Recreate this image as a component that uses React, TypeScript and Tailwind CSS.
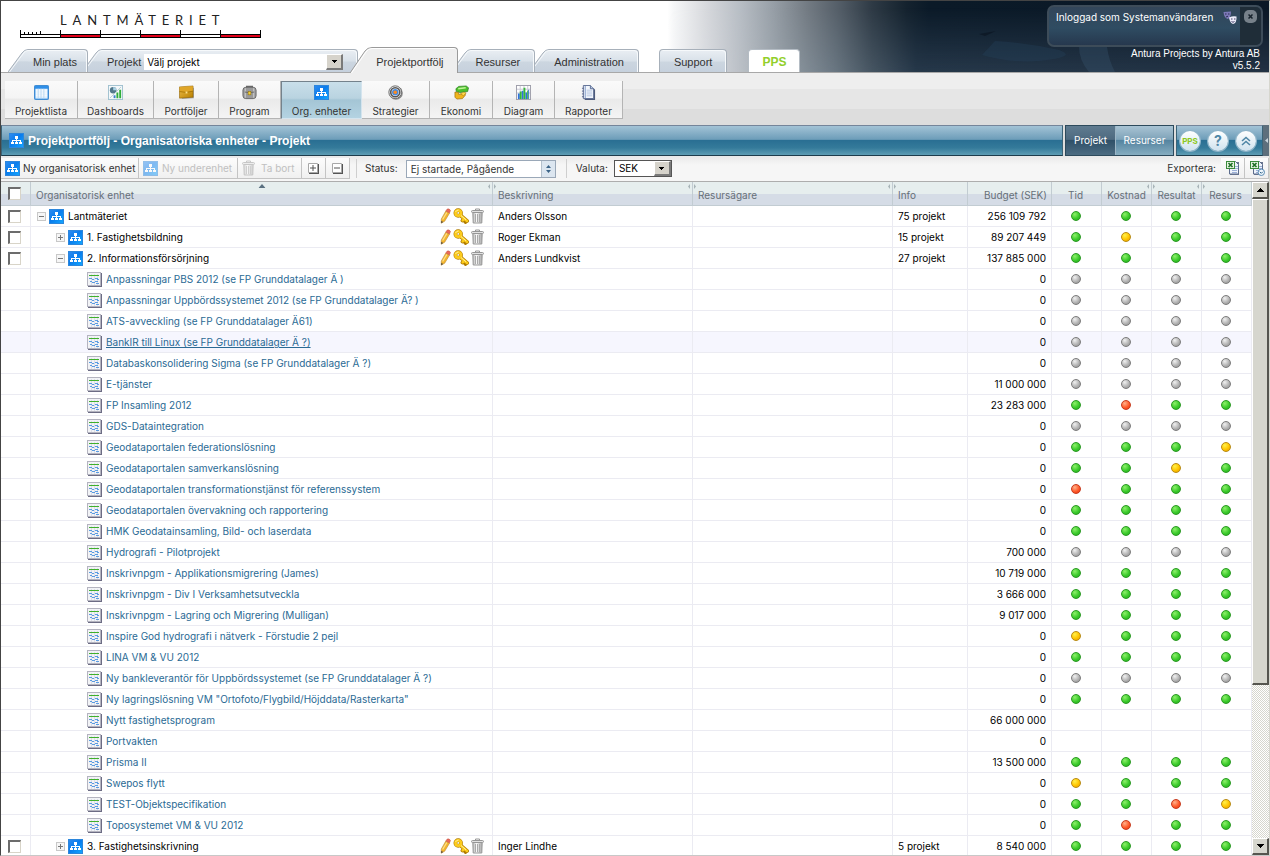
import type { ReactNode } from "react";

type Status = "g" | "y" | "r" | "n";

interface Row {
  name: string;
  level: 0 | 1 | 2;
  open?: boolean;
  owner?: string;
  info?: string;
  budget: string;
  status?: string;
  hovered?: boolean;
}

const rows: Row[] = [
  { name: "Lantmäteriet", level: 0, open: true, owner: "Anders Olsson", info: "75 projekt", budget: "256 109 792", status: "gggg" },
  { name: "1. Fastighetsbildning", level: 1, open: false, owner: "Roger Ekman", info: "15 projekt", budget: "89 207 449", status: "gygg" },
  { name: "2. Informationsförsörjning", level: 1, open: true, owner: "Anders Lundkvist", info: "27 projekt", budget: "137 885 000", status: "gggg" },
  { name: "Anpassningar PBS 2012 (se FP Grunddatalager Ä )", level: 2, budget: "0", status: "nnnn" },
  { name: "Anpassningar Uppbördssystemet 2012 (se FP Grunddatalager Ä? )", level: 2, budget: "0", status: "nnnn" },
  { name: "ATS-avveckling (se FP Grunddatalager Ä61)", level: 2, budget: "0", status: "nnnn" },
  { name: "BankIR till Linux (se FP Grunddatalager Ä ?)", level: 2, budget: "0", status: "nnnn", hovered: true },
  { name: "Databaskonsolidering Sigma (se FP Grunddatalager Ä ?)", level: 2, budget: "0", status: "nnnn" },
  { name: "E-tjänster", level: 2, budget: "11 000 000", status: "nnnn" },
  { name: "FP Insamling 2012", level: 2, budget: "23 283 000", status: "grgg" },
  { name: "GDS-Dataintegration", level: 2, budget: "0", status: "nnnn" },
  { name: "Geodataportalen federationslösning", level: 2, budget: "0", status: "gggy" },
  { name: "Geodataportalen samverkanslösning", level: 2, budget: "0", status: "ggyg" },
  { name: "Geodataportalen transformationstjänst för referenssystem", level: 2, budget: "0", status: "rggg" },
  { name: "Geodataportalen övervakning och rapportering", level: 2, budget: "0", status: "gggg" },
  { name: "HMK Geodatainsamling, Bild- och laserdata", level: 2, budget: "0", status: "gggg" },
  { name: "Hydrografi - Pilotprojekt", level: 2, budget: "700 000", status: "nnnn" },
  { name: "Inskrivnpgm - Applikationsmigrering (James)", level: 2, budget: "10 719 000", status: "gggg" },
  { name: "Inskrivnpgm - Div I Verksamhetsutveckla", level: 2, budget: "3 666 000", status: "gggg" },
  { name: "Inskrivnpgm - Lagring och Migrering (Mulligan)", level: 2, budget: "9 017 000", status: "gggg" },
  { name: "Inspire God hydrografi i nätverk - Förstudie 2 pejl", level: 2, budget: "0", status: "yggg" },
  { name: "LINA VM & VU 2012", level: 2, budget: "0", status: "gggg" },
  { name: "Ny bankleverantör för Uppbördssystemet (se FP Grunddatalager Ä ?)", level: 2, budget: "0", status: "nnnn" },
  { name: 'Ny lagringslösning VM "Ortofoto/Flygbild/Höjddata/Rasterkarta"', level: 2, budget: "0", status: "gggg" },
  { name: "Nytt fastighetsprogram", level: 2, budget: "66 000 000" },
  { name: "Portvakten", level: 2, budget: "0" },
  { name: "Prisma II", level: 2, budget: "13 500 000", status: "gggg" },
  { name: "Swepos flytt", level: 2, budget: "0", status: "yggg" },
  { name: "TEST-Objektspecifikation", level: 2, budget: "0", status: "ggry" },
  { name: "Toposystemet VM & VU 2012", level: 2, budget: "0", status: "grgg" },
  { name: "3. Fastighetsinskrivning", level: 1, open: false, owner: "Inger Lindhe", info: "5 projekt", budget: "8 540 000", status: "gggg" },
];

const dotStyles: Record<Status, string> = {
  g: "border-[#2a9a22] bg-[radial-gradient(circle_at_35%_30%,#8df06a,#3ccb2c_55%,#22a41c)]",
  y: "border-[#b98a10] bg-[radial-gradient(circle_at_35%_30%,#fff04a,#ffc400_55%,#e09a00)]",
  r: "border-[#c83a1c] bg-[radial-gradient(circle_at_35%_30%,#ffb08a,#ff5a2a_55%,#e03010)]",
  n: "border-[#7c7c7c] bg-[radial-gradient(circle_at_35%_30%,#f0f0f0,#b4b4b4_55%,#8a8a8a)]",
};
const dotNames: Record<Status, string> = { g: "Grön", y: "Gul", r: "Röd", n: "Grå" };

function Dot({ status }: { status: Status }) {
  return (
    <span
      role="img"
      aria-label={dotNames[status]}
      className={`mx-auto block size-[10px] rounded-full border ${dotStyles[status]}`}
    />
  );
}

function Gradients() {
  return (
    <svg className="absolute size-0" aria-hidden="true">
      <defs>
        <linearGradient id="orgBlue" x1="0" y1="0" x2="1" y2="1">
          <stop offset="0" stopColor="#2f8cf0" />
          <stop offset="0.45" stopColor="#0a7cec" />
          <stop offset="1" stopColor="#14a8ff" />
        </linearGradient>
        <linearGradient id="tabFill" x1="0" y1="0" x2="0" y2="1">
          <stop offset="0" stopColor="#e9eef3" />
          <stop offset="0.5" stopColor="#d9e1e9" />
          <stop offset="0.55" stopColor="#ccd6e0" />
          <stop offset="1" stopColor="#c6d1dd" />
        </linearGradient>
        <linearGradient id="metal" x1="0" y1="0" x2="1" y2="0">
          <stop offset="0" stopColor="#b4b4b4" />
          <stop offset="0.4" stopColor="#f8f8f8" />
          <stop offset="1" stopColor="#a4a4a4" />
        </linearGradient>
        <linearGradient id="leather" x1="0" y1="0" x2="1" y2="1">
          <stop offset="0" stopColor="#eebc48" />
          <stop offset="1" stopColor="#b88000" />
        </linearGradient>
      </defs>
    </svg>
  );
}

function OrgIcon() {
  return (
    <svg width="15" height="15" viewBox="0 0 15 15" className="shrink-0" aria-hidden="true">
      <rect x="0.5" y="0.5" width="14" height="14" fill="url(#orgBlue)" stroke="#2c86dc" />
      <path d="M7 5h1v2H7zM3 7h9v1H3zM3 8h1v2H3zM7 8h1v2H7zM11 8h1v2h-1z" fill="#fff" />
      <path d="M6 3h3v3H6zM2 9h3v2H2zM6 9h3v2H6zM10 9h3v2h-3z" fill="#fff" />
    </svg>
  );
}

function ProjectIcon() {
  return (
    <svg width="15" height="15" viewBox="0 0 15 15" className="shrink-0" aria-hidden="true">
      <path d="M1 1h14v14H1z" fill="#6c6c84" />
      <rect width="14" height="14" fill="#b4b4c0" />
      <rect x="1" y="1" width="12" height="12" fill="#f2f3f6" />
      <path d="M4.5 2v11M7.5 2v11M10.5 2v11" stroke="#dcdfe8" />
      <path d="M2 3.5h10" stroke="#3fb02c" />
      <path d="M2 6.500h3M5 7.500h2M8 6.500h3M10 7.500h2M3 9.500h2M5 10.500h3M8 9.500h3M9 11.500h3" stroke="#5a9ce2" />
    </svg>
  );
}

function PencilIcon() {
  return (
    <svg width="11" height="16" viewBox="0 0 11 16" aria-hidden="true">
      <path d="M5.800 3 9.600 5 4.700 13.200 1.200 15.200 1.300 11z" fill="#f4b52c" stroke="#b98a3c" strokeWidth="0.600" />
      <path d="M6.800 4.500 2.600 11.500" stroke="#fbe08a" strokeWidth="1.300" />
      <path d="M5.900 2.900 7.200 1 Q9.500 .2 10.500 2.600L9.500 4.900z" fill="#ec6a58" stroke="#c05045" strokeWidth="0.500" />
      <path d="M1.200 15.200 1.300 12.800 3.100 14z" fill="#444" />
    </svg>
  );
}

function KeyIcon() {
  return (
    <svg width="16" height="16" viewBox="0 0 16 16" aria-hidden="true">
      <path d="M7 7 14 13M11 11 9.500 12.500M13.500 13 12.500 14" stroke="#b07c00" strokeWidth="3.800" strokeLinecap="round" />
      <circle cx="5.200" cy="5" r="2.800" fill="none" stroke="#b07c00" strokeWidth="3.800" />
      <path d="M7 7 14 13M11 11 9.700 12.300" stroke="#fccb1c" strokeWidth="2.500" strokeLinecap="round" />
      <circle cx="5.200" cy="5" r="2.700" fill="none" stroke="#fccb1c" strokeWidth="2.700" />
      <path d="M2.500 4Q3.500 2 5.500 2M8 7.500l5 4.300" stroke="#fff09a" fill="none" />
    </svg>
  );
}

function TrashIcon() {
  return (
    <svg width="13" height="16" viewBox="0 0 13 16" aria-hidden="true">
      <path d="M1.800 4.500h9.400l-.4 10.500h-8.600z" fill="url(#metal)" stroke="#9a9a9a" />
      <path d="M4.500 6v8M6.500 6v8M8.500 6v8" stroke="#aaaaaa" />
      <rect x="0.500" y="2.500" width="12" height="2" rx="1" fill="#e2e2e2" stroke="#969696" />
      <path d="M4.500 2V1h4v1" fill="none" stroke="#969696" />
    </svg>
  );
}

function Expander({ open }: { open?: boolean }) {
  return (
    <button
      type="button"
      aria-label={open ? "Fäll ihop" : "Fäll ut"}
      className="flex size-[9px] shrink-0 items-center justify-center border border-[#c8c8c8] bg-[#f6f6f6]"
    >
      <svg width="5" height="5" viewBox="0 0 5 5" aria-hidden="true">
        <path d={open ? "M0 2h5v1H0z" : "M0 2h5v1H0zM2 0h1v5H2z"} fill="#777" />
      </svg>
    </button>
  );
}

function Check({ label }: { label: string }) {
  return (
    <input
      type="checkbox"
      aria-label={label}
      className="mx-auto block size-[13px] appearance-none border-t-2 border-r border-b border-l-2 border-t-[#6c6c6c] border-r-[#d8d4c8] border-b-[#d8d4c8] border-l-[#6c6c6c] bg-white"
    />
  );
}

function TabEdge({ active }: { active?: boolean }) {
  return active ? (
    <svg width="22" height="26" viewBox="0 0 22 26" className="shrink-0" aria-hidden="true">
      <path d="M0 26 L15 4 Q17.500 .5 22 .5 V26z" fill="#eeeeee" />
      <path d="M0 26 L15 4 Q17.500 .5 22 .5" fill="none" stroke="#9a9a9a" />
      <path d="M1.500 26 L16 5 Q18 1.500 22 1.500" fill="none" stroke="#fff" />
    </svg>
  ) : (
    <svg width="20" height="23" viewBox="0 0 20 23" className="shrink-0" aria-hidden="true">
      <path d="M0 23 L14 4 Q16.500 .5 20 .5 V23z" fill="url(#tabFill)" />
      <path d="M0 23 L14 4 Q16.500 .5 20 .5" fill="none" stroke="#a7b0ba" />
      <path d="M1.500 23 L15 5 Q17 1.500 20 1.500" fill="none" stroke="#f6f9fb" />
    </svg>
  );
}

const tabBody =
  "flex h-[23px] items-center rounded-tr-[4px] border-t border-r border-[#a7b0ba] bg-[linear-gradient(#e9eef3,#d9e1e9_50%,#ccd6e0_55%,#c6d1dd)] shadow-[inset_-1px_1px_0_#f6f9fb] pt-[2px]";

function DropArrow() {
  return (
    <span className="pointer-events-none absolute inset-y-0 right-0 flex w-[17px] items-center justify-center border-t border-r-2 border-b-2 border-l border-t-white border-r-[#7a7a7a] border-b-[#7a7a7a] border-l-white bg-[#d6d3cb]">
      <svg width="5" height="3" viewBox="0 0 5 3" aria-hidden="true">
        <path d="M0 0h5v1H4v1H3v1H2V2H1V1H0z" fill="#000" />
      </svg>
    </span>
  );
}

const toolIcons: Record<string, ReactNode> = {
  Projektlista: (
    <>
      <rect x="0.500" y="0.500" width="15" height="15" rx="1" fill="#2f8fe8" stroke="#3a87d0" />
      <rect x="1.500" y="4" width="13" height="10.500" fill="#e2f0fc" />
      <path d="M2 5.500h12M2 7.500h12M2 9.500h12M2 11.500h12" stroke="#fff" />
      <path d="M4.500 4v10M7.500 4v10M10.500 4v10" stroke="#b8d8f2" />
    </>
  ),
  Dashboards: (
    <>
      <rect x="0.500" y="0.500" width="15" height="15" fill="#f4f8fa" stroke="#9fc0cf" />
      <circle cx="5.500" cy="5.500" r="3.500" fill="#52788c" />
      <path d="M5.500 5.500V2A3.500 3.500 0 0 1 9 5.500z" fill="#a9d2e4" />
      <path d="M2 14 14 2" stroke="#b8ccd6" />
      <path d="M6 11h2v3H6z" fill="#3a7fd0" />
      <path d="M9 8h2v6H9zM12 5h2v9h-2z" fill="#2fae3a" />
    </>
  ),
  Portföljer: (
    <>
      <path d="M2 3 16 3v11l-13 1z" fill="#777" opacity="0.600" />
      <path d="M.5 2 15 1v12l-14.500 1z" fill="url(#leather)" stroke="#8c5e00" strokeWidth="0.600" />
      <path d="M.8 2.200 14.700 1.300V6.500Q8 8.500.8 7z" fill="#e0a628" />
      <path d="M.5 7Q8 9 15 6.500" stroke="#9c6c00" fill="none" strokeWidth="0.800" />
      <rect x="7" y="7" width="2" height="2" fill="#ffe28a" />
    </>
  ),
  Program: (
    <>
      <path d="M5 3V1.500h6V3" fill="none" stroke="#666" strokeWidth="1.500" />
      <rect x="1" y="2.500" width="14" height="12" rx="3" fill="#9a9a9a" stroke="#666" />
      <path d="M3.500 3.500v10M12.500 3.500v10" stroke="#c8c8c8" strokeWidth="1.200" />
      <path d="M3 7.500Q8 9 13 7.500" stroke="#666" fill="none" />
      <rect x="6.500" y="7" width="3" height="3.500" fill="#f2ce3a" stroke="#8a6a00" strokeWidth="0.500" />
    </>
  ),
  Strategier: (
    <>
      <circle cx="8.500" cy="8.500" r="7.300" fill="#888" />
      <circle cx="7.700" cy="7.700" r="6.800" fill="#f2f2f2" stroke="#666" strokeWidth="1" />
      <circle cx="7.700" cy="7.700" r="4.800" fill="#fff" stroke="#555" strokeWidth="1.800" />
      <circle cx="7.700" cy="7.700" r="3.400" fill="#4b8ad8" />
      <circle cx="7.700" cy="7.700" r="1.900" fill="#ff8a1c" />
    </>
  ),
  Ekonomi: (
    <>
      <path d="M2 4 5 1.500 13 1l2.500 2-1 4-8 1-4-1z" fill="#4cc02c" stroke="#23781a" strokeWidth="0.700" />
      <path d="M4.500 4 12.500 3" stroke="#c0f49a" strokeWidth="1.500" />
      <path d="M1 7.500 5 8v2l7-1v2l-3 3.500-6 .5-2-2z" fill="#f0b41c" stroke="#9a6a00" strokeWidth="0.700" />
      <path d="M7 9q4-2.500 6-.5l-3 3z" fill="#ffd94a" stroke="#9a6a00" strokeWidth="0.500" />
    </>
  ),
  Diagram: (
    <>
      <rect x="0.500" y="0.500" width="15" height="15" fill="#fff" stroke="#9c9ca8" />
      <path d="M4.500 1v14M8.500 1v14M12.500 1v14M1 4.500h14M1 8.500h14" stroke="#c8c8d4" />
      <path d="M2 9h2v6H2zM6 6h2v9H6zM10 8h2v7h-2zM13 5h1v10h-1z" fill="#2f6fe0" />
      <path d="M4 7h2v8H4zM8 3h2v12H8zM12 6h1v9h-1z" fill="#35b83a" />
    </>
  ),
  Rapporter: (
    <>
      <path d="M4 2h8l3 3v11H4z" fill="#4c5a78" />
      <path d="M2.500.5H10L13.500 4v10.500h-11z" fill="#f2f6fc" stroke="#5a6a90" />
      <path d="M10 .5V4h3.500" fill="#b8c8e4" stroke="#5a6a90" />
      <path d="M4.500 1v13" stroke="#7a94c4" />
      <path d="M6 5.500h6M6 7.500h6M6 9.500h6M6 11.500h6" stroke="#b4c4e0" />
      <path d="M1 3.500h2M1 6.500h2M1 9.500h2M1 12.500h2" stroke="#5a6a90" />
    </>
  ),
};

const tools: { label: string; width: string; active?: boolean }[] = [
  { label: "Projektlista", width: "w-[73px]" },
  { label: "Dashboards", width: "w-[76px]" },
  { label: "Portföljer", width: "w-[65px]" },
  { label: "Program", width: "w-[62px]" },
  { label: "Org. enheter", width: "w-[81px]", active: true },
  { label: "Strategier", width: "w-[68px]" },
  { label: "Ekonomi", width: "w-[63px]" },
  { label: "Diagram", width: "w-[62px]" },
  { label: "Rapporter", width: "w-[68px]" },
];

function Banner() {
  return (
    <svg
      className="absolute top-0 right-0 h-full w-[630px]"
      viewBox="0 0 630 71"
      preserveAspectRatio="none"
      aria-hidden="true"
    >
      <defs>
        <linearGradient id="bannerTop" x1="0" y1="0" x2="1" y2="0">
          <stop offset="0.045" stopColor="#ffffff" />
          <stop offset="0.055" stopColor="#f6f7f8" />
          <stop offset="0.108" stopColor="#d6d8dc" />
          <stop offset="0.160" stopColor="#b8bec5" />
          <stop offset="0.213" stopColor="#979fa7" />
          <stop offset="0.267" stopColor="#737b83" />
          <stop offset="0.320" stopColor="#525c66" />
          <stop offset="0.370" stopColor="#2e3a45" />
          <stop offset="0.425" stopColor="#14222e" />
          <stop offset="0.460" stopColor="#0b1a28" />
          <stop offset="1" stopColor="#0a1826" />
        </linearGradient>
        <linearGradient id="bannerLow" x1="0" y1="0" x2="1" y2="0">
          <stop offset="0.045" stopColor="#ffffff" />
          <stop offset="0.060" stopColor="#f2f3f5" />
          <stop offset="0.140" stopColor="#c6cad0" />
          <stop offset="0.220" stopColor="#98a1a9" />
          <stop offset="0.310" stopColor="#6a7782" />
          <stop offset="0.370" stopColor="#465562" />
          <stop offset="0.440" stopColor="#26384a" />
          <stop offset="1" stopColor="#223244" />
        </linearGradient>
        <linearGradient id="bannerFade" x1="0" y1="0" x2="0" y2="1">
          <stop offset="0.100" stopColor="#000" />
          <stop offset="1" stopColor="#fff" />
        </linearGradient>
        <mask id="bannerMask">
          <rect width="630" height="71" fill="url(#bannerFade)" />
        </mask>
      </defs>
      <rect width="630" height="71" fill="url(#bannerTop)" />
      <rect width="630" height="71" fill="url(#bannerLow)" mask="url(#bannerMask)" />
      <path d="M340 33 357 30 346 35z" fill="#0b1622" opacity="0.700" />
      <path d="M343 54 356 40Q390 42 420 49 440 56 400 60 370 62 343 54z" fill="#24435c" opacity="0.350" />
      <path d="M440 46h28q2 14 8 25h-26q-10-12-10-25z" fill="#3a5570" opacity="0.350" />
    </svg>
  );
}

function LogoMark() {
  return (
    <a href="#start" aria-label="Lantmäteriet" className="flex w-[242px] flex-col text-[#222]">
      <span className="pl-[40px] font-[Lato,sans-serif] text-[13px] leading-[16px] tracking-[0.45em]">LANTMÄTERIET</span>
      <svg width="242" height="9" viewBox="0 0 242 9" aria-hidden="true" className="mt-[2px]">
        <path d="M0 4h241v4H0z" fill="#000" />
        <path d="M1 5h240v2H1z" fill="#fff" />
        <path d="M41 5h39v2H41zM121 5h39v2h-39zM201 5h39v2h-39z" fill="#e2001a" />
        <path d="M0 0h1v8H0zM40 0h1v8h-1zM80 0h1v8h-1zM120 0h1v8h-1zM160 0h1v8h-1zM200 0h1v8h-1zM240 0h1v8h-1z" fill="#000" />
        <path d="M4 2h1v2H4zM8 2h1v2H8zM12 2h1v2h-1zM16 2h1v2h-1zM20 1h1v3h-1z" fill="#000" />
      </svg>
    </a>
  );
}

function Header() {
  return (
    <header className="relative flex h-[72px] shrink-0 justify-between border-b border-[#a8a8a8] bg-white">
      <Banner />
      <div className="relative flex flex-col justify-between">
        <div className="pt-[11px] pl-[19px]">
          <LogoMark />
        </div>
        <nav className="-mb-px flex items-end pl-[7px] font-['Liberation_Sans',Arial,sans-serif] text-[11px] text-[#333]">
          <a href="#min-plats" className="z-20 mb-px flex">
            <TabEdge />
            <span className={`${tabBody} pr-[10px] pl-[5px]`}>Min plats</span>
          </a>
          <div className="z-10 mb-px -ml-[6px] flex">
            <TabEdge />
            <div className={`${tabBody} gap-[3px] pr-[14px] pl-[5px]`}>
              <label htmlFor="project">Projekt</label>
              <div className="relative flex">
                <select
                  id="project"
                  className="h-[16px] w-[199px] appearance-none bg-white pl-[3px] font-[Inter,sans-serif] text-[10px] leading-[16px] text-black"
                >
                  <option>Välj projekt</option>
                </select>
                <DropArrow />
              </div>
            </div>
          </div>
          <a href="#portfolj" aria-current="page" className="z-20 -ml-[8px] flex">
            <TabEdge active />
            <span className="flex h-[26px] items-center rounded-tr-[4px] border-t border-r border-[#9a9a9a] bg-[#eeeeee] pt-[3px] pr-[13px] pl-[4px] shadow-[inset_0_1px_0_#fff]">
              Projektportfölj
            </span>
          </a>
          <a href="#resurser" className="z-10 mb-px -ml-[7px] flex">
            <TabEdge />
            <span className={`${tabBody} pr-[14px] pl-[5px]`}>Resurser</span>
          </a>
          <a href="#administration" className="mb-px -ml-[6px] flex">
            <TabEdge />
            <span className={`${tabBody} pr-[14px] pl-[5px]`}>Administration</span>
          </a>
          <a href="#support" className={`${tabBody} mb-px ml-[20px] rounded-tl-[4px] border-l px-[14px]`}>
            Support
          </a>
          <a
            href="#pps"
            className="mb-px ml-[21px] flex h-[23px] items-center rounded-t-[4px] border-x border-t border-[#b4bcc4] bg-white px-[13px] pt-[2px] text-[12px] font-bold text-[#92cf2c]"
          >
            PPS
          </a>
        </nav>
      </div>
      <div className="relative flex flex-col items-end pt-[4px] pr-[6px] font-[Inter,sans-serif] text-[10px] text-white">
        <div className="flex h-[42px] w-[216px] rounded-[7px] border-2 border-[#3d4c59] bg-[linear-gradient(#33465a,#2f4c62_55%,#26384e)]">
          <span className="flex-1 pt-[4px] pl-[7px] leading-[13px] whitespace-nowrap">Inloggad som Systemanvändaren</span>
          <svg width="14" height="14" viewBox="0 0 14 14" className="mt-[4px] mr-[3px]" aria-hidden="true">
            <path d="M.5 1 8 .5Q8 7 4.500 8 1 6.500.5 1z" fill="#7d78b8" />
            <path d="M2 3h1.500M5 3h1.500M3 6l2-.8" stroke="#2c2c50" />
            <path d="M6 6.500Q10 4.500 13.500 5.500 14 12 10 13 7 12 6 6.500z" fill="#ececfa" />
            <path d="M8 8h1.500M11 8h1.500M8.500 10.500q1.500 1.500 3 0" stroke="#44406a" fill="none" />
          </svg>
          <div className="flex w-[21px] justify-center rounded-r-[5px] bg-[#1f2d38] pt-[3px]">
            <button
              type="button"
              aria-label="Logga ut"
              className="flex size-[13px] items-center justify-center rounded-[5px] bg-[#77818a]"
            >
              <svg width="5" height="5" viewBox="0 0 5 5" aria-hidden="true">
                <path d="M.5.5l4 4M4.500.5l-4 4" stroke="#17222c" strokeWidth="1.500" />
              </svg>
            </button>
          </div>
        </div>
        <p className="pt-[1px] pr-[3px] text-right font-['Liberation_Sans',Arial,sans-serif] leading-[12px]">
          Antura Projects by Antura AB
          <br />
          v5.5.2
        </p>
      </div>
    </header>
  );
}

function Toolbar() {
  return (
    <div className="flex h-[52px] shrink-0 bg-[linear-gradient(#eeeeee_16px,#e6e6e6_16px,#e6e6e6_36px,#dddddd_36px)] pt-[8px] pl-[4px] font-[Inter,sans-serif] text-[10px] text-[#333]">
      {tools.map((tool) => (
        <button
          key={tool.label}
          type="button"
          className={`flex h-[38px] flex-col items-center border-r border-b ${tool.width} ${
            tool.active
              ? "border-t border-l border-t-[#74828c] border-r-[#d4e4ee] border-b-[#d4e4ee] border-l-[#74828c] bg-[linear-gradient(#c9dfea,#b9d3e0_45%,#a4c5d5_50%,#b4d3e2)] pt-[3px]"
              : "border-r-[#b4b4b4] border-b-[#b4b4b4] bg-[linear-gradient(#fafafa,#f4f4f4_45%,#eaeaea_50%,#f4f4f4)] pt-[4px]"
          }`}
        >
          {tool.active ? (
            <OrgIcon />
          ) : (
            <svg width="15" height="15" viewBox="0 0 16 16" aria-hidden="true">
              {toolIcons[tool.label]}
            </svg>
          )}
          <span className="pt-[5px] leading-[13px] whitespace-nowrap">{tool.label}</span>
        </button>
      ))}
    </div>
  );
}

const barStyle =
  "flex items-center border border-t-[#75859a] border-b-[#1d3c4c] border-x-[#3c6478] bg-[linear-gradient(#a3c3d6,#6d9db9_46%,#2a6f93_50%,#347a9a_75%,#5e9db4)]";

function TitleBar() {
  const round =
    "flex size-[20px] items-center justify-center rounded-full bg-[linear-gradient(#ffffff,#cfe2ee)] shadow-[0_0_0_1px_#8fb4c8] font-bold";
  return (
    <div className="flex h-[31px] shrink-0 gap-[2px] bg-[#dddddd] font-[Inter,sans-serif]">
      <div className={`${barStyle} flex-1 gap-[4px] pl-[7px]`}>
        <OrgIcon />
        <h1 className="font-['Liberation_Sans',Arial,sans-serif] text-[12px] font-bold text-white">
          Projektportfölj - Organisatoriska enheter - Projekt
        </h1>
      </div>
      <div className="flex border border-[#2d4a5c] text-[10px] text-white">
        <button type="button" className="w-[50px] border-r border-[#9db6c6] bg-[linear-gradient(#5f7b90,#4e6a80_46%,#2f5068_50%,#4c6c82)]">
          Projekt
        </button>
        <button type="button" className="w-[57px] bg-[linear-gradient(#a9c4d4,#7fa3b9_46%,#5584a0_50%,#86adc0)]">
          Resurser
        </button>
      </div>
      <div className="flex">
        <div className={`${barStyle} w-[87px] gap-[8px] pl-[3px]`}>
          <button type="button" className={`${round} text-[8px] text-[#8cc820]`}>PPS</button>
          <button type="button" aria-label="Hjälp" className={`${round} text-[14px] text-[#4f86a6]`}>?</button>
          <button type="button" aria-label="Minimera" className={round}>
            <svg width="10" height="10" viewBox="0 0 10 10" aria-hidden="true">
              <path d="M1 5 5 1.500 9 5M1 9 5 5.500 9 9" fill="none" stroke="#4f86a6" strokeWidth="1.600" />
            </svg>
          </button>
        </div>
        <div className="flex w-[6px] items-center justify-center bg-[#5d6f7c]">
          <svg width="3" height="5" viewBox="0 0 3 5" aria-hidden="true">
            <path d="M3 0v5L0 2.500z" fill="#c8d4dc" />
          </svg>
        </div>
      </div>
    </div>
  );
}

function Excel({ more }: { more?: boolean }) {
  return (
    <svg width="16" height="16" viewBox="0 0 16 16" aria-hidden="true">
      <path d="M5 2h9v13H5z" fill="#6a7690" />
      <path d="M4.500 1.500h6L13.500 4.500v9.500h-9z" fill="#eef3fb" stroke="#5c6c8c" />
      <path d="M7 10.500h5M7 12.500h5M10 6.500h3M10 8.500h3" stroke="#9cb0d8" />
      <rect x="1.500" y="1.500" width="8" height="7" fill="#e4f2e0" stroke="#3a8a3a" />
      <path d="M3.500 3l4 4M7.500 3l-4 4" stroke="#1d6e24" strokeWidth="1.600" />
      {more && (
        <>
          <circle cx="12.300" cy="12.300" r="3.200" fill="#eef6fc" stroke="#5c8cb4" />
          <path d="M10.800 11.800 12.300 13.300l1.500-1.500" fill="none" stroke="#33658c" />
        </>
      )}
    </svg>
  );
}

function Actions() {
  const button =
    "flex h-[21px] items-center border-r border-b border-[#c4c4c4] bg-[linear-gradient(#fcfcfc,#f0f0f0)] whitespace-nowrap";
  return (
    <div className="flex h-[26px] shrink-0 items-center border-b border-[#adadad] bg-[linear-gradient(#e9e9e9,#f6f6f6_35%,#f6f6f6)] font-[Inter,sans-serif] text-[10px] text-[#333]">
      <button type="button" className={`${button} w-[138px] gap-[3px] pl-[4px]`}>
        <OrgIcon />
        Ny organisatorisk enhet
      </button>
      <button type="button" disabled className={`${button} w-[99px] gap-[4px] pl-[4px] text-[#c0c0c0]`}>
        <span className="opacity-50">
          <OrgIcon />
        </span>
        Ny underenhet
      </button>
      <button type="button" disabled className={`${button} w-[64px] gap-[6px] pl-[4px] text-[#c0c0c0]`}>
        <span className="opacity-50">
          <TrashIcon />
        </span>
        Ta bort
      </button>
      <button type="button" aria-label="Fäll ut alla" className={`${button} w-[24px] justify-center`}>
        <svg width="11" height="11" viewBox="0 0 11 11" aria-hidden="true">
          <path d="M1 1h10v10H1z" fill="#555" />
          <path d="M.5.5h9v9h-9z" fill="#fff" stroke="#a8a8a8" />
          <path d="M2 5h6M5 2v6" stroke="#555" />
        </svg>
      </button>
      <button type="button" aria-label="Fäll ihop alla" className={`${button} w-[24px] justify-center`}>
        <svg width="11" height="11" viewBox="0 0 11 11" aria-hidden="true">
          <path d="M1 1h10v10H1z" fill="#555" />
          <path d="M.5.5h9v9h-9z" fill="#fff" stroke="#a8a8a8" />
          <path d="M2 5h6" stroke="#555" />
        </svg>
      </button>
      <div className="ml-[6px] flex h-[19px] items-center gap-[8px] border-l border-[#cfcfcf] pl-[8px]">
        <label htmlFor="status">Status:</label>
        <div className="relative flex">
          <select
            id="status"
            className="h-[18px] w-[150px] appearance-none border border-[#9aa8b8] bg-white pl-[4px] text-[10px] leading-[16px]"
          >
            <option>Ej startade, Pågående</option>
          </select>
          <span className="pointer-events-none absolute inset-y-px right-px flex w-[14px] items-center justify-center border-l border-[#b4c0cc] bg-[#dce6f0]">
            <svg width="5" height="8" viewBox="0 0 5 8" aria-hidden="true">
              <path d="M0 3 2.500 0 5 3zM0 5 2.500 8 5 5z" fill="#3c6488" />
            </svg>
          </span>
        </div>
      </div>
      <div className="ml-[10px] flex h-[19px] items-center gap-[6px] border-l border-[#cfcfcf] pl-[9px]">
        <label htmlFor="currency">Valuta:</label>
        <div className="relative flex border border-[#555]">
          <select id="currency" className="h-[15px] w-[56px] appearance-none bg-white pl-[4px] text-[10px] leading-[15px] text-black">
            <option>SEK</option>
          </select>
          <DropArrow />
        </div>
      </div>
      <div className="ml-auto flex items-center">
        <span className="pr-[5px]">Exportera:</span>
        <button type="button" aria-label="Exportera till Excel" className={`${button} w-[24px] justify-center`}>
          <Excel />
        </button>
        <button type="button" aria-label="Exportera till Excel med val" className={`${button} w-[24px] justify-center`}>
          <Excel more />
        </button>
      </div>
    </div>
  );
}

function Resizer() {
  return (
    <svg width="8" height="5" viewBox="0 0 8 5" className="absolute top-[2px] -right-[4px] z-10" aria-hidden="true">
      <path d="M2 0v5L0 2.500zM6 0v5l2-2.500z" fill="#a8b4b8" />
    </svg>
  );
}

const headCell = "relative h-[24px] border-r border-b border-[#c2ccd2] p-0 pt-[3px] font-normal";
const cell = "border-r border-b border-[#ebebf2] p-0";

function Grid() {
  return (
    <table className="w-full table-fixed border-separate border-spacing-0 font-[Inter,sans-serif] text-[10px] leading-[20px] text-black">
      <colgroup>
        <col className="w-[30px]" />
        <col />
        <col className="w-[200px]" />
        <col className="w-[200px]" />
        <col className="w-[75px]" />
        <col className="w-[84px]" />
        <col className="w-[50px]" />
        <col className="w-[50px]" />
        <col className="w-[50px]" />
        <col className="w-[50px]" />
      </colgroup>
      <thead className="bg-[linear-gradient(#e6eeee_50%,#d5dce6_50%)] text-left text-[#667078]">
        <tr>
          <th className={`${headCell} pr-[2px] pb-[3px]`}>
            <Check label="Markera alla" />
          </th>
          <th className={`${headCell} pl-[5px]`}>
            Organisatorisk enhet
            <svg
              width="7"
              height="4"
              viewBox="0 0 7 4"
              className="absolute top-[2px] left-1/2 -translate-x-1/2"
              aria-hidden="true"
            >
              <path d="M0 4 3.500 0 7 4z" fill="#5a7080" />
            </svg>
            <Resizer />
          </th>
          <th className={`${headCell} pl-[5px]`}>
            Beskrivning
            <Resizer />
          </th>
          <th className={`${headCell} pl-[5px]`}>
            Resursägare
            <Resizer />
          </th>
          <th className={`${headCell} pl-[5px]`}>Info</th>
          <th className={`${headCell} pr-[4px] text-right`}>Budget (SEK)</th>
          <th className={`${headCell} pr-[2px] text-center`}>Tid</th>
          <th className={`${headCell} text-center`}>
            Kostnad
            <Resizer />
          </th>
          <th className={`${headCell} text-center`}>
            Resultat
            <Resizer />
          </th>
          <th className={`${headCell} pr-[2px] text-center`}>Resurs</th>
        </tr>
      </thead>
      <tbody>
        {rows.map((row) => (
          <tr key={row.name} className={`h-[21px] ${row.hovered ? "bg-[#f6f6fe]" : "bg-white"}`}>
            <td className={`${cell} pr-[2px]`}>{row.level < 2 && <Check label={`Markera ${row.name}`} />}</td>
            <td className={cell}>
              {row.level < 2 ? (
                <div className={`flex h-[20px] items-center pr-[8px] ${row.level === 0 ? "pl-[6px]" : "pl-[25px]"}`}>
                  <Expander open={row.open} />
                  <span className="pr-[4px] pl-[3px]">
                    <OrgIcon />
                  </span>
                  <span className="flex-1">{row.name}</span>
                  <span className="flex items-center gap-[2px]">
                    <button type="button" aria-label="Redigera">
                      <PencilIcon />
                    </button>
                    <button type="button" aria-label="Behörigheter">
                      <KeyIcon />
                    </button>
                    <button type="button" aria-label="Ta bort">
                      <TrashIcon />
                    </button>
                  </span>
                </div>
              ) : (
                <div className="flex h-[20px] items-center gap-[4px] pl-[56px]">
                  <ProjectIcon />
                  <a href="#projekt" className={`whitespace-nowrap text-[#2a6a94] ${row.hovered ? "underline" : ""}`}>
                    {row.name}
                  </a>
                </div>
              )}
            </td>
            <td className={`${cell} pl-[5px]`}>{row.owner}</td>
            <td className={cell} />
            <td className={`${cell} pl-[5px]`}>{row.info}</td>
            <td className={`${cell} pr-[5px] text-right`}>{row.budget}</td>
            {[0, 1, 2, 3].map((i) => (
              <td key={i} className={`${cell} pr-[1px]`}>
                {row.status && <Dot status={row.status[i] as Status} />}
              </td>
            ))}
          </tr>
        ))}
      </tbody>
    </table>
  );
}

function Scrollbar() {
  const bevel =
    "border-t border-r-2 border-b-2 border-l border-t-white border-r-[#55554f] border-b-[#55554f] border-l-white bg-[#d6d6ce]";
  return (
    <div className="flex w-[17px] shrink-0 flex-col bg-[repeating-conic-gradient(#ffffff_0_25%,#d6d6ce_0_50%)] bg-[length:2px_2px]">
      <button type="button" aria-label="Rulla upp" className={`flex h-[17px] items-center justify-center ${bevel}`}>
        <svg width="7" height="4" viewBox="0 0 7 4" aria-hidden="true">
          <path d="M0 4h7V3H6V2H5V1H4V0H3v1H2v1H1v1H0z" />
        </svg>
      </button>
      <div className={`flex-[486] ${bevel}`} />
      <div className="flex-[154]" />
      <button type="button" aria-label="Rulla ned" className={`flex h-[17px] items-center justify-center ${bevel}`}>
        <svg width="7" height="4" viewBox="0 0 7 4" aria-hidden="true">
          <path d="M0 0h7v1H6v1H5v1H4v1H3V3H2V2H1V1H0z" />
        </svg>
      </button>
    </div>
  );
}

export default function App() {
  return (
    <div className="flex h-screen flex-col overflow-hidden border border-t-[#444] border-r-[#d6d6ce] border-b-[#c8c8c8] border-l-[#444] bg-white">
      <Gradients />
      <Header />
      <Toolbar />
      <TitleBar />
      <Actions />
      <main className="flex min-h-0 flex-1">
        <div className="min-w-0 flex-1 overflow-hidden">
          <Grid />
        </div>
        <Scrollbar />
      </main>
    </div>
  );
}
